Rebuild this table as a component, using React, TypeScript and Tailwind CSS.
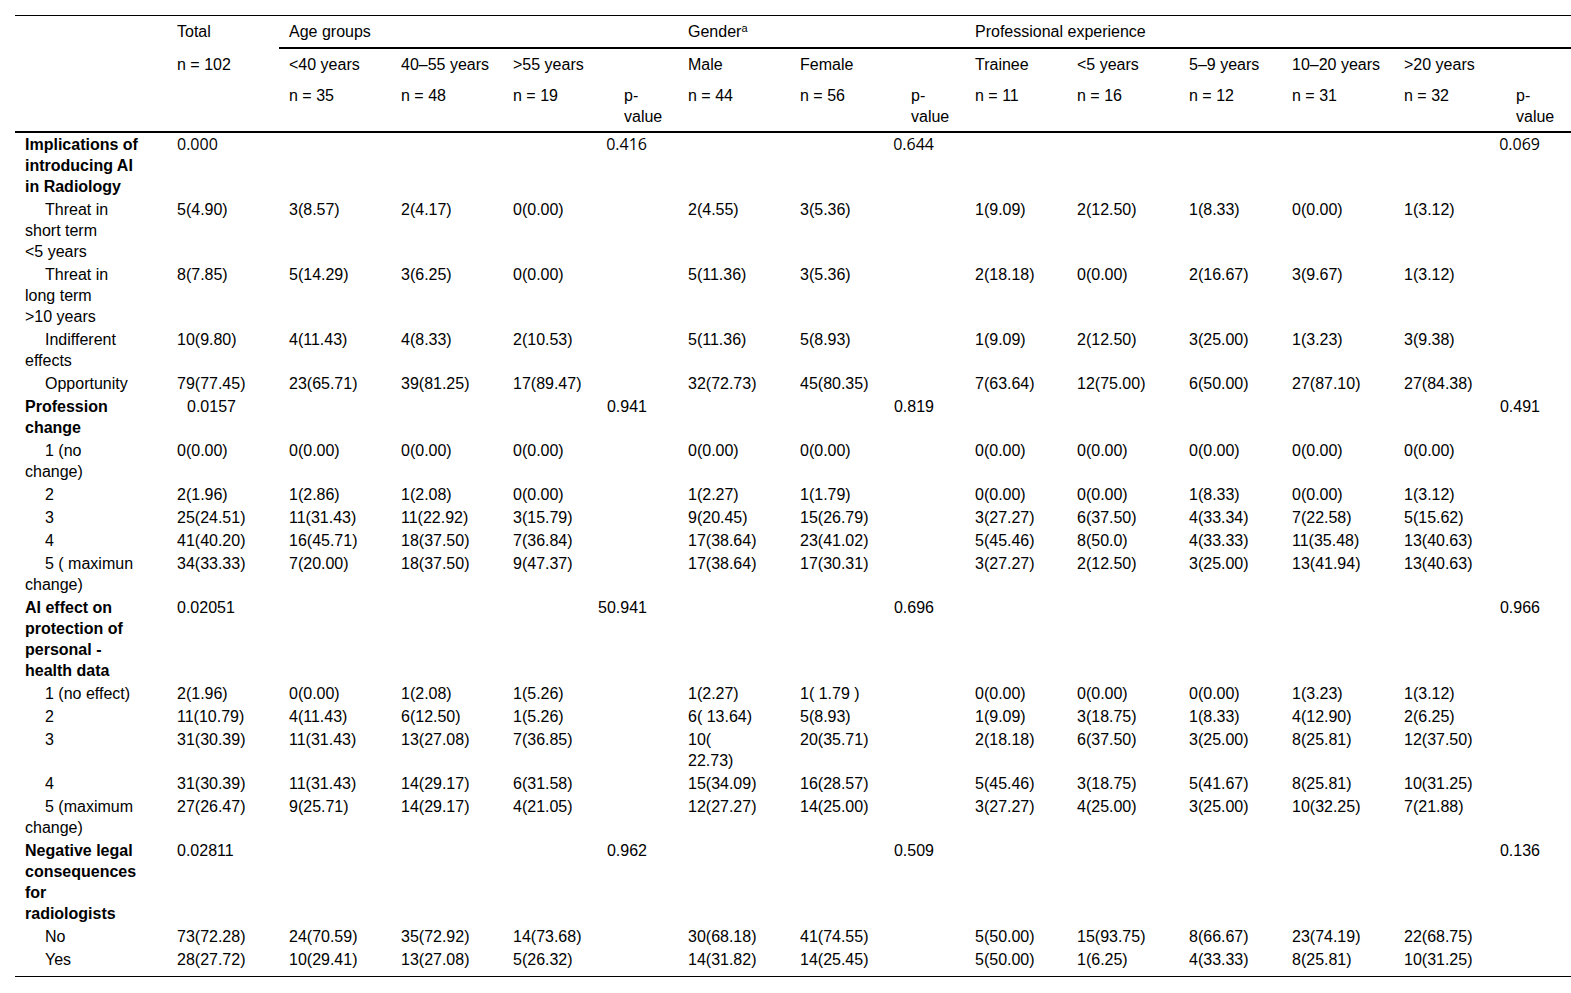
import React from "react";

type Cell = string | string[] | null;
type Row = { label: string[]; bold?: boolean; cells: Cell[]; pfont?: boolean; totalIndent?: boolean };

const COLS =
  "grid grid-cols-[152px_112px_112px_112px_111px_64px_112px_111px_64px_102px_112px_103px_112px_112px_65px]";

const P_COLS = new Set([5, 8, 14]);

const g = (
  total: string,
  p1: string,
  p2: string,
  p3: string
): Cell[] => [total, null, null, null, p1, null, null, p2, null, null, null, null, null, p3];

const d = (...v: Cell[]): Cell[] => {
  // v: total, a1,a2,a3, m,f, t1..t5
  return [v[0], v[1], v[2], v[3], null, v[4], v[5], null, v[6], v[7], v[8], v[9], v[10], null];
};

const rows: Row[] = [
  { label: ["Implications of", "introducing AI", "in Radiology"], bold: true, cells: g("0.000", "0.416", "0.644", "0.069"), pfont: true },
  { label: ["Threat in", "short term", "<5 years"], cells: d("5(4.90)", "3(8.57)", "2(4.17)", "0(0.00)", "2(4.55)", "3(5.36)", "1(9.09)", "2(12.50)", "1(8.33)", "0(0.00)", "1(3.12)") },
  { label: ["Threat in", "long term", ">10 years"], cells: d("8(7.85)", "5(14.29)", "3(6.25)", "0(0.00)", "5(11.36)", "3(5.36)", "2(18.18)", "0(0.00)", "2(16.67)", "3(9.67)", "1(3.12)") },
  { label: ["Indifferent", "effects"], cells: d("10(9.80)", "4(11.43)", "4(8.33)", "2(10.53)", "5(11.36)", "5(8.93)", "1(9.09)", "2(12.50)", "3(25.00)", "1(3.23)", "3(9.38)") },
  { label: ["Opportunity"], cells: d("79(77.45)", "23(65.71)", "39(81.25)", "17(89.47)", "32(72.73)", "45(80.35)", "7(63.64)", "12(75.00)", "6(50.00)", "27(87.10)", "27(84.38)") },
  { label: ["Profession", "change"], bold: true, cells: g("0.0157", "0.941", "0.819", "0.491"), totalIndent: true },
  { label: ["1 (no", "change)"], cells: d("0(0.00)", "0(0.00)", "0(0.00)", "0(0.00)", "0(0.00)", "0(0.00)", "0(0.00)", "0(0.00)", "0(0.00)", "0(0.00)", "0(0.00)") },
  { label: ["2"], cells: d("2(1.96)", "1(2.86)", "1(2.08)", "0(0.00)", "1(2.27)", "1(1.79)", "0(0.00)", "0(0.00)", "1(8.33)", "0(0.00)", "1(3.12)") },
  { label: ["3"], cells: d("25(24.51)", "11(31.43)", "11(22.92)", "3(15.79)", "9(20.45)", "15(26.79)", "3(27.27)", "6(37.50)", "4(33.34)", "7(22.58)", "5(15.62)") },
  { label: ["4"], cells: d("41(40.20)", "16(45.71)", "18(37.50)", "7(36.84)", "17(38.64)", "23(41.02)", "5(45.46)", "8(50.0)", "4(33.33)", "11(35.48)", "13(40.63)") },
  { label: ["5 ( maximun", "change)"], cells: d("34(33.33)", "7(20.00)", "18(37.50)", "9(47.37)", "17(38.64)", "17(30.31)", "3(27.27)", "2(12.50)", "3(25.00)", "13(41.94)", "13(40.63)") },
  { label: ["AI effect on", "protection of", "personal -", "health data"], bold: true, cells: g("0.02051", "50.941", "0.696", "0.966") },
  { label: ["1 (no effect)"], cells: d("2(1.96)", "0(0.00)", "1(2.08)", "1(5.26)", "1(2.27)", "1( 1.79 )", "0(0.00)", "0(0.00)", "0(0.00)", "1(3.23)", "1(3.12)") },
  { label: ["2"], cells: d("11(10.79)", "4(11.43)", "6(12.50)", "1(5.26)", "6( 13.64)", "5(8.93)", "1(9.09)", "3(18.75)", "1(8.33)", "4(12.90)", "2(6.25)") },
  { label: ["3"], cells: d("31(30.39)", "11(31.43)", "13(27.08)", "7(36.85)", ["10(", "22.73)"], "20(35.71)", "2(18.18)", "6(37.50)", "3(25.00)", "8(25.81)", "12(37.50)") },
  { label: ["4"], cells: d("31(30.39)", "11(31.43)", "14(29.17)", "6(31.58)", "15(34.09)", "16(28.57)", "5(45.46)", "3(18.75)", "5(41.67)", "8(25.81)", "10(31.25)") },
  { label: ["5 (maximum", "change)"], cells: d("27(26.47)", "9(25.71)", "14(29.17)", "4(21.05)", "12(27.27)", "14(25.00)", "3(27.27)", "4(25.00)", "3(25.00)", "10(32.25)", "7(21.88)") },
  { label: ["Negative legal", "consequences", "for", "radiologists"], bold: true, cells: g("0.02811", "0.962", "0.509", "0.136") },
  { label: ["No"], cells: d("73(72.28)", "24(70.59)", "35(72.92)", "14(73.68)", "30(68.18)", "41(74.55)", "5(50.00)", "15(93.75)", "8(66.67)", "23(74.19)", "22(68.75)") },
  { label: ["Yes"], cells: d("28(27.72)", "10(29.41)", "13(27.08)", "5(26.32)", "14(31.82)", "14(25.45)", "5(50.00)", "1(6.25)", "4(33.33)", "8(25.81)", "10(31.25)") },
];

function Lines({ v }: { v: string[] }) {
  return (
    <>
      {v.map((t, i) => (
        <React.Fragment key={i}>
          {i > 0 && <br />}
          {t}
        </React.Fragment>
      ))}
    </>
  );
}

const OPEN = "font-['Open_Sans',sans-serif] text-[16px] leading-[21px]";

function DataRow({ row }: { row: Row }) {
  return (
    <div className={COLS}>
      <div className={`pl-[10px] py-[1px] whitespace-pre ${row.bold ? "font-bold" : "indent-[20px]"}`}>
        <Lines v={row.label} />
      </div>
      {row.cells.map((c, i) => {
        const col = i + 1;
        if (c === null) return <div key={i} />;
        if (P_COLS.has(col)) {
          return (
            <div key={i} className="py-[1px] flex justify-end pr-[31px]">
              <span className={`whitespace-nowrap ${row.pfont ? OPEN : ""}`}>{c as string}</span>
            </div>
          );
        }
        const isTotalGroup = col === 1 && row.bold;
        return (
          <div
            key={i}
            className={`py-[1px] whitespace-pre ${
              isTotalGroup && row.totalIndent ? "pl-[20px]" : "pl-[10px]"
            } ${isTotalGroup && row.pfont ? OPEN : ""}`}
          >
            {Array.isArray(c) ? <Lines v={c} /> : c}
          </div>
        );
      })}
    </div>
  );
}

export default function App() {
  return (
    <div className="min-h-screen bg-white pt-[15px] text-black font-['Liberation_Sans',Arial,Helvetica,sans-serif] text-[16px] leading-[21px]">
      <div className="ml-[15px] w-[1556px] border-t border-b border-black pb-[5px]">
        {/* Header row 1 */}
        <div className={COLS}>
          <div />
          <div className="pl-[10px] pt-[5px]">Total</div>
          <div className="col-span-4 pl-[10px] pt-[5px] pb-[5px] border-b-2 border-black">Age groups</div>
          <div className="col-span-3 pl-[10px] pt-[5px] pb-[5px] border-b-2 border-black">
            Gender<span className="relative -top-[5px] text-[11px] leading-none">a</span>
          </div>
          <div className="col-span-6 pl-[10px] pt-[5px] pb-[5px] border-b-2 border-black">Professional experience</div>
        </div>
        {/* Header row 2 */}
        <div className={COLS}>
          <div />
          <div className="pl-[10px] py-[5px]">n = 102</div>
          <div className="pl-[10px] py-[5px]">&lt;40 years</div>
          <div className="pl-[10px] py-[5px]">40–55 years</div>
          <div className="pl-[10px] py-[5px]">&gt;55 years</div>
          <div />
          <div className="pl-[10px] py-[5px]">Male</div>
          <div className="pl-[10px] py-[5px]">Female</div>
          <div />
          <div className="pl-[10px] py-[5px]">Trainee</div>
          <div className="pl-[10px] py-[5px]">&lt;5 years</div>
          <div className="pl-[10px] py-[5px]">5–9 years</div>
          <div className="pl-[10px] py-[5px]">10–20 years</div>
          <div className="pl-[10px] py-[5px]">&gt;20 years</div>
          <div />
        </div>
        {/* Header row 3 */}
        <div className={`${COLS} border-b-2 border-black`}>
          <div />
          <div />
          <div className="pl-[10px] pt-[5px] pb-[4px]">n = 35</div>
          <div className="pl-[10px] pt-[5px] pb-[4px]">n = 48</div>
          <div className="pl-[10px] pt-[5px] pb-[4px]">n = 19</div>
          <div className="pl-[10px] pt-[5px] pb-[4px]">p-<br />value</div>
          <div className="pl-[10px] pt-[5px] pb-[4px]">n = 44</div>
          <div className="pl-[10px] pt-[5px] pb-[4px]">n = 56</div>
          <div className="pl-[10px] pt-[5px] pb-[4px]">p-<br />value</div>
          <div className="pl-[10px] pt-[5px] pb-[4px]">n = 11</div>
          <div className="pl-[10px] pt-[5px] pb-[4px]">n = 16</div>
          <div className="pl-[10px] pt-[5px] pb-[4px]">n = 12</div>
          <div className="pl-[10px] pt-[5px] pb-[4px]">n = 31</div>
          <div className="pl-[10px] pt-[5px] pb-[4px]">n = 32</div>
          <div className="pl-[10px] pt-[5px] pb-[4px]">p-<br />value</div>
        </div>
        {rows.map((r, i) => (
          <DataRow key={i} row={r} />
        ))}
      </div>
    </div>
  );
}
